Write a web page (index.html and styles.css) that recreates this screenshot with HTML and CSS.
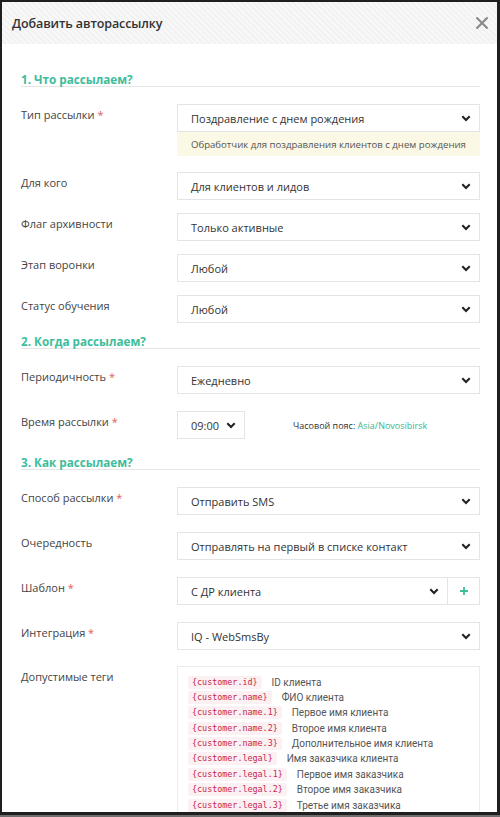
FILE: index.html
```html
<!DOCTYPE html>
<html lang="ru">
<head>
<meta charset="utf-8">
<title>Добавить авторассылку</title>
<link rel="stylesheet" href="styles.css">
</head>
<body>
<div class="modal">
  <div class="modal-header">
    <div class="modal-title">Добавить авторассылку</div>
    <svg class="close" width="12" height="12" viewBox="0 0 12 12"><path d="M1.2 1.2 L10.8 10.8 M10.8 1.2 L1.2 10.8" stroke="#8a8a8a" stroke-width="2.2" stroke-linecap="square"/></svg>
  </div>
  <div class="modal-body">
    <div class="section-title">1. Что рассылаем?</div>

    <div class="row after-help">
      <div class="label">Тип рассылки <span class="req">*</span></div>
      <div class="control">
        <div class="select"><span>Поздравление с днем рождения</span><svg class="chev" width="10" height="7" viewBox="0 0 10 7"><path d="M1.3 1.3 L5 5 L8.7 1.3" fill="none" stroke="#222" stroke-width="2.1"/></svg></div>
        <div class="help">Обработчик для поздравления клиентов с днем рождения</div>
      </div>
    </div>

    <div class="row tight">
      <div class="label">Для кого</div>
      <div class="control">
        <div class="select"><span>Для клиентов и лидов</span><svg class="chev" width="10" height="7" viewBox="0 0 10 7"><path d="M1.3 1.3 L5 5 L8.7 1.3" fill="none" stroke="#222" stroke-width="2.1"/></svg></div>
      </div>
    </div>

    <div class="row tight">
      <div class="label">Флаг архивности</div>
      <div class="control">
        <div class="select"><span>Только активные</span><svg class="chev" width="10" height="7" viewBox="0 0 10 7"><path d="M1.3 1.3 L5 5 L8.7 1.3" fill="none" stroke="#222" stroke-width="2.1"/></svg></div>
      </div>
    </div>

    <div class="row tight">
      <div class="label">Этап воронки</div>
      <div class="control">
        <div class="select"><span>Любой</span><svg class="chev" width="10" height="7" viewBox="0 0 10 7"><path d="M1.3 1.3 L5 5 L8.7 1.3" fill="none" stroke="#222" stroke-width="2.1"/></svg></div>
      </div>
    </div>

    <div class="row before-title">
      <div class="label">Статус обучения</div>
      <div class="control">
        <div class="select"><span>Любой</span><svg class="chev" width="10" height="7" viewBox="0 0 10 7"><path d="M1.3 1.3 L5 5 L8.7 1.3" fill="none" stroke="#222" stroke-width="2.1"/></svg></div>
      </div>
    </div>

    <div class="section-title">2. Когда рассылаем?</div>

    <div class="row">
      <div class="label">Периодичность <span class="req">*</span></div>
      <div class="control">
        <div class="select"><span>Ежедневно</span><svg class="chev" width="10" height="7" viewBox="0 0 10 7"><path d="M1.3 1.3 L5 5 L8.7 1.3" fill="none" stroke="#222" stroke-width="2.1"/></svg></div>
      </div>
    </div>

    <div class="row time-row">
      <div class="label">Время рассылки <span class="req">*</span></div>
      <div class="control inline">
        <div class="select time"><span>09:00</span><svg class="chev" width="10" height="7" viewBox="0 0 10 7"><path d="M1.3 1.3 L5 5 L8.7 1.3" fill="none" stroke="#222" stroke-width="2.1"/></svg></div>
        <div class="tz">Часовой пояс: <span class="tz-val">Asia/Novosibirsk</span></div>
      </div>
    </div>

    <div class="section-title">3. Как рассылаем?</div>

    <div class="row">
      <div class="label">Способ рассылки <span class="req">*</span></div>
      <div class="control">
        <div class="select"><span>Отправить SMS</span><svg class="chev" width="10" height="7" viewBox="0 0 10 7"><path d="M1.3 1.3 L5 5 L8.7 1.3" fill="none" stroke="#222" stroke-width="2.1"/></svg></div>
      </div>
    </div>

    <div class="row">
      <div class="label">Очередность</div>
      <div class="control">
        <div class="select"><span>Отправлять на первый в списке контакт</span><svg class="chev" width="10" height="7" viewBox="0 0 10 7"><path d="M1.3 1.3 L5 5 L8.7 1.3" fill="none" stroke="#222" stroke-width="2.1"/></svg></div>
      </div>
    </div>

    <div class="row">
      <div class="label">Шаблон <span class="req">*</span></div>
      <div class="control group">
        <div class="select grow"><span>С ДР клиента</span><svg class="chev" width="10" height="7" viewBox="0 0 10 7"><path d="M1.3 1.3 L5 5 L8.7 1.3" fill="none" stroke="#222" stroke-width="2.1"/></svg></div>
        <div class="add-btn"><svg width="10" height="10" viewBox="0 0 10 10"><path d="M5 1 V9 M1 5 H9" stroke="#3dbd9b" stroke-width="1.8"/></svg></div>
      </div>
    </div>

    <div class="row before-tags">
      <div class="label">Интеграция <span class="req">*</span></div>
      <div class="control">
        <div class="select"><span>IQ - WebSmsBy</span><svg class="chev" width="10" height="7" viewBox="0 0 10 7"><path d="M1.3 1.3 L5 5 L8.7 1.3" fill="none" stroke="#222" stroke-width="2.1"/></svg></div>
      </div>
    </div>

    <div class="row">
      <div class="label">Допустимые теги</div>
      <div class="control">
        <div class="tags">
          <div class="tag"><code>{customer.id}</code><span>ID клиента</span></div>
          <div class="tag"><code>{customer.name}</code><span>ФИО клиента</span></div>
          <div class="tag"><code>{customer.name.1}</code><span>Первое имя клиента</span></div>
          <div class="tag"><code>{customer.name.2}</code><span>Второе имя клиента</span></div>
          <div class="tag"><code>{customer.name.3}</code><span>Дополнительное имя клиента</span></div>
          <div class="tag"><code>{customer.legal}</code><span>Имя заказчика клиента</span></div>
          <div class="tag"><code>{customer.legal.1}</code><span>Первое имя заказчика</span></div>
          <div class="tag"><code>{customer.legal.2}</code><span>Второе имя заказчика</span></div>
          <div class="tag"><code>{customer.legal.3}</code><span>Третье имя заказчика</span></div>
        </div>
      </div>
    </div>
  </div>
</div>
</body>
</html>
```

FILE: styles.css
```css
html, body {
  margin: 0;
  padding: 0;
}

body {
  background: #6e6e6e;
  font-family: "Open Sans", "Noto Sans", sans-serif;
  color: #333;
  height: 817px;
  overflow: hidden;
}

.modal {
  width: 500px;
  height: 815px;
  box-sizing: border-box;
  border: 2px solid #1f1f1f;
  border-right-width: 3px;
  border-bottom-width: 3px;
  background: #fff;
  overflow: hidden;
}

.modal-header {
  height: 42px;
  display: flex;
  align-items: center;
  justify-content: space-between;
  padding: 0 9px 0 10px;
  background: repeating-linear-gradient(45deg, #f8f8f8 0 2px, #f2f2f2 2px 4px);
}

.modal-title {
  font-size: 12.5px;
  font-weight: 600;
  color: #333;
  letter-spacing: -0.1px;
}

.close {
  display: block;
}

.modal-body {
  padding: 28px 17px 0 19px;
}

.section-title {
  color: #3dbd9b;
  font-weight: 700;
  font-size: 11.7px;
  line-height: 14px;
  border-bottom: 1px solid #e6e6e6;
  margin-bottom: 17px;
}

.row {
  display: flex;
  margin-bottom: 17px;
}

.row.after-help {
  margin-bottom: 16px;
}

.row.tight {
  margin-bottom: 13px;
}

.row.before-title {
  margin-bottom: 11px;
}

.row.time-row {
  margin-bottom: 16px;
}

.row.before-tags {
  margin-bottom: 16px;
}

.label {
  width: 156px;
  flex: none;
  font-size: 11px;
  line-height: 16px;
  padding-top: 3px;
  color: #444;
}

.req {
  color: #e25c5c;
}

.control {
  flex: 1;
  min-width: 0;
}

.control.inline {
  display: flex;
  align-items: center;
}

.control.group {
  display: flex;
}

.select {
  height: 28px;
  box-sizing: border-box;
  border: 1px solid #e4e4e4;
  display: flex;
  align-items: center;
  justify-content: space-between;
  padding: 0 8px 0 13px;
  font-size: 11px;
  color: #333;
  background: #fff;
}

.select.grow {
  flex: 1;
}

.select.time {
  width: 68px;
  flex: none;
}

.chev {
  display: block;
  flex: none;
}

.add-btn {
  width: 32px;
  height: 28px;
  box-sizing: border-box;
  border: 1px solid #e4e4e4;
  border-left: none;
  display: flex;
  align-items: center;
  justify-content: center;
}

.help {
  background: #fcf8e6;
  height: 24px;
  display: flex;
  align-items: center;
  padding-left: 14px;
  font-size: 9.6px;
  color: #555;
}

.tz {
  margin-left: 48px;
  font-size: 9px;
  color: #333;
}

.tz-val {
  color: #3bb594;
}

.tags {
  border: 1px solid #ececec;
  padding: 8.5px 10px 0 10px;
  height: 200px;
  display: flex;
  flex-direction: column;
  gap: 2.4px;
}

.tag {
  display: flex;
  align-items: center;
  height: 13px;
}

.tag code {
  font-family: "DejaVu Sans Mono", "Liberation Mono", monospace;
  font-size: 8.4px;
  line-height: 13px;
  color: #c7254e;
  background: #fbf0f2;
  padding: 0 4px;
  border-radius: 2px;
}

.tag span {
  margin-left: 10px;
  font-family: Roboto, "Open Sans", sans-serif;
  font-size: 10px;
  color: #555;
}
```
